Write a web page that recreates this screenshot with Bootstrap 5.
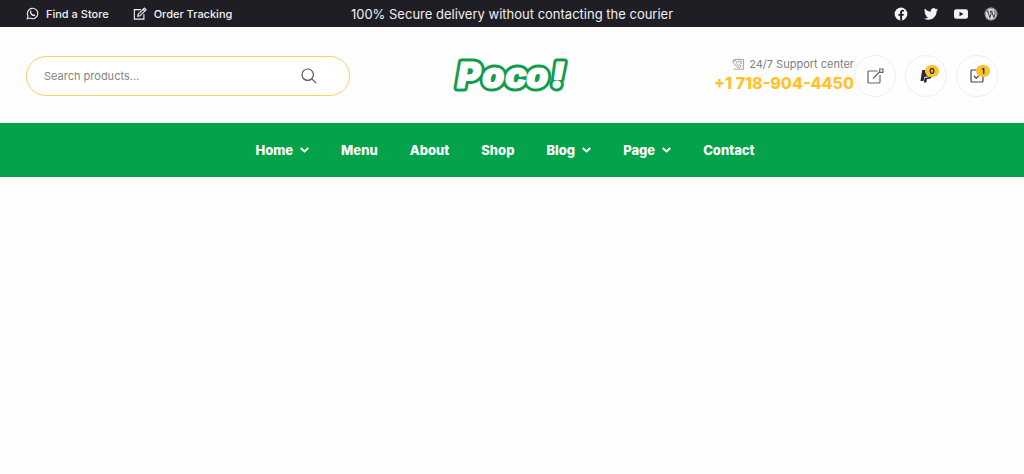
<!DOCTYPE html>
<html lang="en">
<head>
<meta charset="utf-8">
<meta name="viewport" content="width=device-width, initial-scale=1">
<title>Poco!</title>
<link href="https://cdn.jsdelivr.net/npm/bootstrap@5.3.0/dist/css/bootstrap.min.css" rel="stylesheet">
<style>
  :root { --ink: #1f1e25; --green: #04a24a; --gold: #ffc22c; --gutter: 26px; }
  body { font-family: Inter, "Open Sans", sans-serif; background: #fefefe; color: var(--ink); }
  a { color: inherit; text-decoration: none; }
  svg { display: block; flex: none; }
  .gutter { padding-left: var(--gutter); padding-right: var(--gutter); }
  .topbar { background: var(--ink); color: #f1f1f1; height: 27px; font-size: 12px; line-height: 18px; }
  .topbar-note { font-size: 13px; font-weight: 400; }
  .topbar-links { gap: 24px; }
  .topbar-links a { gap: 7px; font-size: 11px; font-weight: 500; }
  .topbar-social { gap: 16px; }
  .masthead { height: 96px; padding-top: 2px; }
  .search { max-width: 324px; height: 40px; border: 1px solid #ffd061; border-radius: 20px; padding: 0 32px 0 17px; background: #fff; }
  .search input { font-size: 11px; min-width: 0; color: #666; }
  .search input::placeholder { color: #858585; opacity: 1; }
  .search input:focus { outline: 0; }
  .search button { color: #555; }
  .support { font-size: 11px; line-height: 18px; color: #808080; }
  .support-phone { font-size: 16px; line-height: 20px; font-weight: 800; color: var(--gold); }
  .round-links { gap: 9px; }
  .round-link { width: 42px; height: 42px; border: 1px solid #eee; border-radius: 50%; color: #333; }
  .count { top: 9px; right: 7px; width: 14px; height: 12px; border-radius: 6px; background: var(--gold); color: var(--ink); font-size: 8px; line-height: 12px; font-weight: 700; }
  .mainnav { background: var(--green); height: 54px; gap: 32px; padding: 0 14px 0 0; }
  .mainnav a { gap: 7px; color: #fff; font-size: 13px; line-height: 20px; font-weight: 800; }
  .logo text { font-weight: 900; font-style: italic; font-size: 36px; stroke-linejoin: round; }
</style>
</head>
<body>
<header>
  <div class="topbar gutter row g-0 align-items-center">
    <div class="topbar-links col d-flex">
      <a href="#" class="d-flex align-items-center"><svg width="13" height="13" viewBox="0 0 16 16" fill="none" stroke="currentColor" stroke-width="1.4"><path d="M1.5 14.5l1-3.5a6.4 6.4 0 1 1 2.6 2.6z"/><path d="M5.3 4.600c1-.8 1.800 1.600 1.100 2.200.5 1.200 1.600 2.200 2.800 2.700.8-.9 2.900.2 2.200 1.100-2.600 2.600-8.300-2.800-6.100-6z" fill="currentColor" stroke="none"/></svg>Find a Store</a>
      <a href="#" class="d-flex align-items-center"><svg width="14" height="13" viewBox="0 0 16 15" fill="none" stroke="currentColor" stroke-width="1.3"><path d="M9 3H1.5v11h11V8.500M6 8.200L13 1.200l2 2-7 7-2.600.6zM11.500 2.700l2 2"/></svg>Order Tracking</a>
    </div>
    <div class="topbar-note col-auto text-center">100% Secure delivery without contacting the courier</div>
    <div class="topbar-social col d-flex justify-content-end">
      <a href="#" aria-label="Facebook"><svg width="14" height="14" viewBox="0 0 16 16"><circle cx="8" cy="8" r="7.3" fill="#f4f4f4"/><path d="M7 15.4V10H5V7.900h2V6.200c0-2 1.200-3 3-3l1.400.1v1.800h-1c-.9 0-1.200.5-1.200 1.200v1.600h2.100l-.4 2.100H9.200v5.400z" fill="#1f1e25"/></svg></a>
      <a href="#" aria-label="Twitter"><svg width="14" height="14" viewBox="0 0 16 16" fill="#f4f4f4"><path d="M5 14.500c6 0 9.400-5 9.400-9.400v-.4A6.600 6.600 0 0 0 16 3l-1.900.5a3.300 3.300 0 0 0 1.400-1.800l-2 .8a3.300 3.300 0 0 0-5.700 3A9.300 9.300 0 0 1 1.100 2.100a3.300 3.300 0 0 0 1 4.400L.6 6a3.300 3.300 0 0 0 2.700 3.300l-1.500.1a3.300 3.300 0 0 0 3.100 2.300A6.600 6.600 0 0 1 0 13a9.300 9.300 0 0 0 5 1.500z"/></svg></a>
      <a href="#" aria-label="YouTube"><svg width="14" height="14" viewBox="0 0 16 16"><rect y="2.500" width="16" height="11" rx="2.600" fill="#f4f4f4"/><path d="M6.300 5.400v5.200L10.900 8z" fill="#1f1e25"/></svg></a>
      <a href="#" aria-label="WordPress"><svg width="14" height="14" viewBox="0 0 16 16"><circle cx="8" cy="8" r="7.300" fill="#e0e0e0"/><circle cx="8" cy="8" r="6.500" fill="none" stroke="#1f1e25" stroke-width=".5"/><path d="M3 4.800h2.500M7 4.800h3M4.200 5l2.500 7.200L8.200 7.500 7.400 5M8.800 5l2.300 7 1.700-5c.3-1.200-1.100-1.500-.5-2.800" fill="none" stroke="#1f1e25" stroke-width="1"/></svg></a>
    </div>
  </div>

  <div class="masthead gutter row g-0 align-items-center">
    <div class="col">
      <form class="search d-flex align-items-center" role="search">
        <input type="search" class="flex-grow-1 border-0 bg-transparent p-0" placeholder="Search products…" aria-label="Search products">
        <button type="button" class="border-0 bg-transparent p-0" aria-label="Search"><svg width="16" height="16" viewBox="0 0 16 16" fill="none" stroke="currentColor" stroke-width="1.200"><circle cx="6.700" cy="6.700" r="5.700"/><path d="M10.800 10.800l4.400 4.400"/></svg></button>
      </form>
    </div>
    <a href="#" class="logo col-auto" aria-label="Poco! home">
      <svg width="116" height="44" viewBox="0 0 116 44" overflow="visible"><text x="3 28 51 72 97" y="34" fill="#109c4a" stroke="#109c4a" stroke-width="7">Poco!</text><text x="3 28 51 72 97" y="34" aria-hidden="true" fill="#fff" stroke="#fff" stroke-width="1">Poco!</text></svg>
    </a>
    <div class="col d-flex justify-content-end align-items-center">
      <div class="text-end text-nowrap pb-1">
        <div class="support d-flex justify-content-end align-items-center gap-1"><svg width="13" height="13" viewBox="0 0 14 14" fill="none" stroke="#999" stroke-width="1"><path d="M3 1.500h9.500V12H2M1 3l2-1.500M1 3c1 4 3 6 7 7.500l2-2-2-1-1 .7L4.800 6l.7-1-1.500-2zM6 3.500h5M8 5.500h3"/></svg>24/7 Support center</div>
        <a href="tel:+17189044450" class="support-phone d-block">+1 718-904-4450</a>
      </div>
      <div class="round-links d-flex">
        <a href="#" class="round-link d-flex align-items-center justify-content-center" aria-label="Account"><svg width="17" height="16" viewBox="0 0 17 16" fill="none" stroke="#666" stroke-width="1.200"><path d="M10.500 3H2a1 1 0 0 0-1 1v10a1 1 0 0 0 1 1h10a1 1 0 0 0 1-1V7M6 10.500L13 3.500M12.700 1h3.300v3.300h-3.300z"/></svg></a>
        <a href="#" class="round-link position-relative d-flex align-items-center justify-content-center" aria-label="Wishlist"><svg width="12" height="14" viewBox="0 0 12 14" fill="#292c33"><path d="M2.200 1h5.300c2.200 0 3.300 1.400 2.900 3.300C9.900 6.700 8.300 7.800 6 7.800H4.400L3.600 12H.5z"/><path d="M11 4.600c.8.700 1 1.700.7 2.800-.5 1.800-1.900 2.500-3.700 2.500H7l-.6 3.600H3.800l.9-4.800h1.700C9 8.700 10.500 7.200 11 4.600z"/></svg><span class="count position-absolute text-center">0</span></a>
        <a href="#" class="round-link position-relative d-flex align-items-center justify-content-center" aria-label="Cart"><svg width="14" height="14" viewBox="0 0 14 14" fill="none" stroke="#444" stroke-width="1.200"><rect x="1" y="1" width="12" height="12" rx="1"/><path d="M4 7l2.200 2.200L10.500 5"/></svg><span class="count position-absolute text-center">1</span></a>
      </div>
    </div>
  </div>

  <nav class="mainnav d-flex justify-content-center align-items-center" aria-label="Main">
    <a href="#" class="d-flex align-items-center">Home <svg width="9" height="6" viewBox="0 0 9 6" fill="none" stroke="currentColor" stroke-width="2"><path d="M.7 1l3.800 3.500L8.300 1"/></svg></a>
    <a href="#">Menu</a>
    <a href="#">About</a>
    <a href="#">Shop</a>
    <a href="#" class="d-flex align-items-center">Blog <svg width="9" height="6" viewBox="0 0 9 6" fill="none" stroke="currentColor" stroke-width="2"><path d="M.7 1l3.800 3.500L8.300 1"/></svg></a>
    <a href="#" class="d-flex align-items-center">Page <svg width="9" height="6" viewBox="0 0 9 6" fill="none" stroke="currentColor" stroke-width="2"><path d="M.7 1l3.800 3.500L8.300 1"/></svg></a>
    <a href="#">Contact</a>
  </nav>
</header>
<script src="https://cdn.jsdelivr.net/npm/bootstrap@5.3.0/dist/js/bootstrap.bundle.min.js"></script>
</body>
</html>
